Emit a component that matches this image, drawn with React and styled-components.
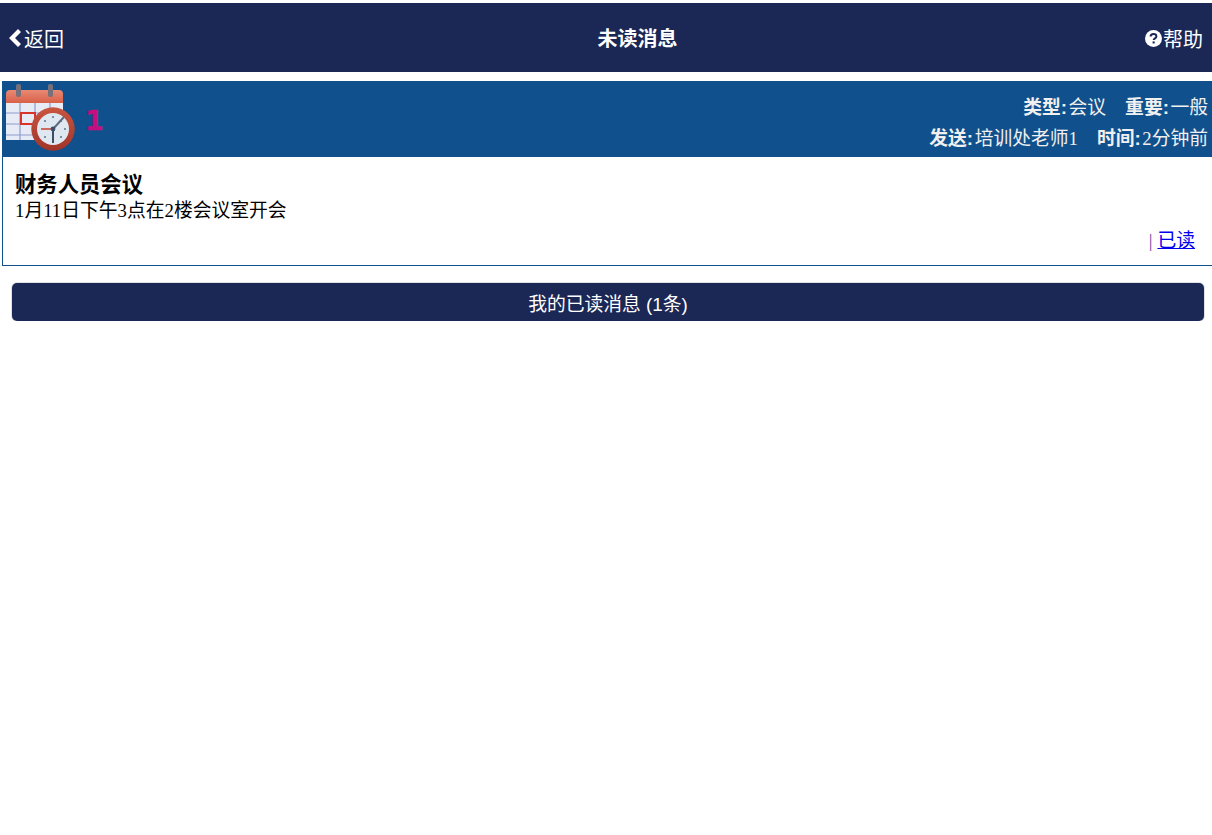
import React from "react";
import styled, { createGlobalStyle } from "styled-components";

const GlobalStyle = createGlobalStyle`
    html, body {
        margin: 0;
        padding: 0;
        background: #fff;
        font-family: "Liberation Serif", "Noto Sans CJK SC", serif;
        font-size: 18.8px;
        color: #000;
    }
`;
const Page = styled.div`
    padding-top: 3px;
    width: 1212px;
    overflow: hidden;
`;
const Header = styled.div`
    display: grid;
    grid-template-columns: 1fr auto 1fr;
    align-items: center;
    height: 69px;
    padding: 0 9px 0 8px;
    background-color: #1b2754;
    color: #fff;
    font-size: 20px;
`;
const HeaderLink = styled.a`
    display: flex;
    align-items: center;
    justify-content: ${(p) => (p.$right ? "flex-end" : "flex-start")};
    gap: 1px;
    padding-top: 1px;
    color: #fff;
    text-decoration: none;
    font-family: "Liberation Sans", "Noto Sans CJK SC", sans-serif;
`;
const Title = styled.h1`
    margin: 0 0 0 64px;
    font-size: 20px;
    font-weight: bold;
    font-family: "Liberation Sans", "Noto Sans CJK SC", sans-serif;
`;
const Card = styled.div`
    margin: 9px 0 0 2px;
    border-left: 1px solid #10508c;
    border-bottom: 1px solid #10508c;
`;
const CardHead = styled.div`
    display: flex;
    justify-content: space-between;
    align-items: center;
    height: 76px;
    margin-left: -1px;
    padding: 0 4px 0 1px;
    background-color: #10508c;
    color: #f0f0f0;
`;
const IconBox = styled.div`
    display: flex;
    align-items: center;
    gap: 6px;
`;
const Count = styled.span`
    color: #c4107f;
    font-family: "DejaVu Sans", sans-serif;
    font-weight: bold;
    font-size: 27px;
    line-height: 27px;
    margin-top: 3px;
    -webkit-text-stroke: 0.3px #c4107f;
`;
const Meta = styled.div`
    display: flex;
    flex-direction: column;
    align-items: flex-end;
    gap: 7px;
    padding-top: 8px;
`;
const MetaRow = styled.div`
    display: flex;
    gap: 19px;
    line-height: 24px;
`;
const MetaLabel = styled.b`
    font-weight: bold;
    margin-right: 1.5px;
    font-family: "Liberation Sans", "Noto Sans CJK SC", sans-serif;
`;
const CardBody = styled.div`
    padding: 15px 17px 12px 12px;
`;
const Subject = styled.div`
    font-size: 21.33px;
    font-weight: bold;
    line-height: 26px;
    font-family: "Liberation Sans", "Noto Sans CJK SC", sans-serif;
`;
const Content = styled.div`
    line-height: 26px;
`;
const Actions = styled.div`
    display: flex;
    justify-content: flex-end;
    gap: 5px;
    margin-top: 5px;
    line-height: 24px;
    color: #6a3fa0;
`;
const ReadLink = styled.a`
    color: #0000ee;
    text-decoration: underline;
`;
const ReadButton = styled.button`
    display: block;
    width: 1192px;
    height: 38px;
    margin: 17px 0 0 12px;
    padding: 0;
    border: none;
    border-radius: 5px;
    box-shadow: 0 0 0 1px #e2e2e6;
    background-color: #1b2754;
    color: #fff;
    font-size: 18.8px;
    font-family: "Liberation Sans", "Noto Sans CJK SC", sans-serif;
`;

function CalendarIcon() {
    return (
        <svg width="76" height="72" viewBox="0 0 76 72">
            <defs>
                <linearGradient id="calTop" x1="0" y1="0" x2="0" y2="1">
                    <stop offset="0" stopColor="#e98a74" />
                    <stop offset="1" stopColor="#d8604a" />
                </linearGradient>
                <linearGradient id="clockRim" x1="0" y1="0" x2="0" y2="1">
                    <stop offset="0" stopColor="#c9553f" />
                    <stop offset="1" stopColor="#a0342a" />
                </linearGradient>
                <filter id="soft"><feGaussianBlur stdDeviation="0.6" /></filter>
            </defs>
            <g filter="url(#soft)">
                <rect x="3" y="18" width="57" height="39" fill="#e6ebf5" />
                <path d="M3 30H60M3 41H60M3 52H60M17 18V57M32 18V57M47 18V57" stroke="#8d9dcc" strokeWidth="1.2" fill="none" />
                <path d="M3 11a4 4 0 0 1 4-4H56a4 4 0 0 1 4 4V20H3Z" fill="url(#calTop)" />
                <rect x="13" y="1" width="5" height="13" rx="2" fill="#75707a" />
                <rect x="45" y="1" width="5" height="13" rx="2" fill="#75707a" />
                <rect x="18" y="30" width="14" height="11" fill="none" stroke="#d8342a" strokeWidth="2" />
                <circle cx="50" cy="46" r="21.7" fill="url(#clockRim)" />
                <circle cx="50" cy="46" r="16" fill="#dfe8f0" />
                <g fill="#5f7590">
                    <circle cx="50" cy="34" r="1" /><circle cx="50" cy="58" r="1" /><circle cx="62" cy="46" r="1" />
                    <circle cx="42" cy="38" r="1" /><circle cx="58" cy="54" r="1" /><circle cx="42" cy="54" r="1" /><circle cx="58" cy="38" r="1" />
                </g>
                <path d="M50 46L61 34" stroke="#5b6b80" strokeWidth="2" />
                <path d="M50 46V60" stroke="#3d4f66" strokeWidth="2" />
                <path d="M50 46H38" stroke="#c84a3c" strokeWidth="1.6" />
                <circle cx="50" cy="46" r="2.4" fill="#3d4f66" />
            </g>
        </svg>
    );
}

function ChevronIcon() {
    return (
        <svg width="15" height="20" viewBox="0 0 15 20">
            <path d="M1 10L10 1l3 3-6 6 6 6-3 3Z" fill="#fff" />
        </svg>
    );
}

function HelpIcon() {
    return (
        <svg width="17" height="17" viewBox="0 0 17 17">
            <circle cx="8.5" cy="8.5" r="8.5" fill="#fff" />
            <path d="M5.6 6.6c0-1.7 1.3-2.6 2.9-2.6s2.9.9 2.9 2.4c0 2-2.7 2-2.7 3.7" fill="none" stroke="#1b2754" strokeWidth="2" />
            <rect x="7.6" y="11.4" width="2.1" height="2.1" fill="#1b2754" />
        </svg>
    );
}

export default function App() {
    return (
        <Page>
            <GlobalStyle />
            <Header>
                <HeaderLink href="#"><ChevronIcon />返回</HeaderLink>
                <Title>未读消息</Title>
                <HeaderLink href="#" $right><HelpIcon />帮助</HeaderLink>
            </Header>
            <Card>
                <CardHead>
                    <IconBox>
                        <CalendarIcon />
                        <Count>1</Count>
                    </IconBox>
                    <Meta>
                        <MetaRow>
                            <span><MetaLabel>类型:</MetaLabel>会议</span>
                            <span><MetaLabel>重要:</MetaLabel>一般</span>
                        </MetaRow>
                        <MetaRow>
                            <span><MetaLabel>发送:</MetaLabel>培训处老师1</span>
                            <span><MetaLabel>时间:</MetaLabel>2分钟前</span>
                        </MetaRow>
                    </Meta>
                </CardHead>
                <CardBody>
                    <Subject>财务人员会议</Subject>
                    <Content>1月11日下午3点在2楼会议室开会</Content>
                    <Actions>| <ReadLink href="#">已读</ReadLink></Actions>
                </CardBody>
            </Card>
            <ReadButton>我的已读消息 (1条)</ReadButton>
        </Page>
    );
}
